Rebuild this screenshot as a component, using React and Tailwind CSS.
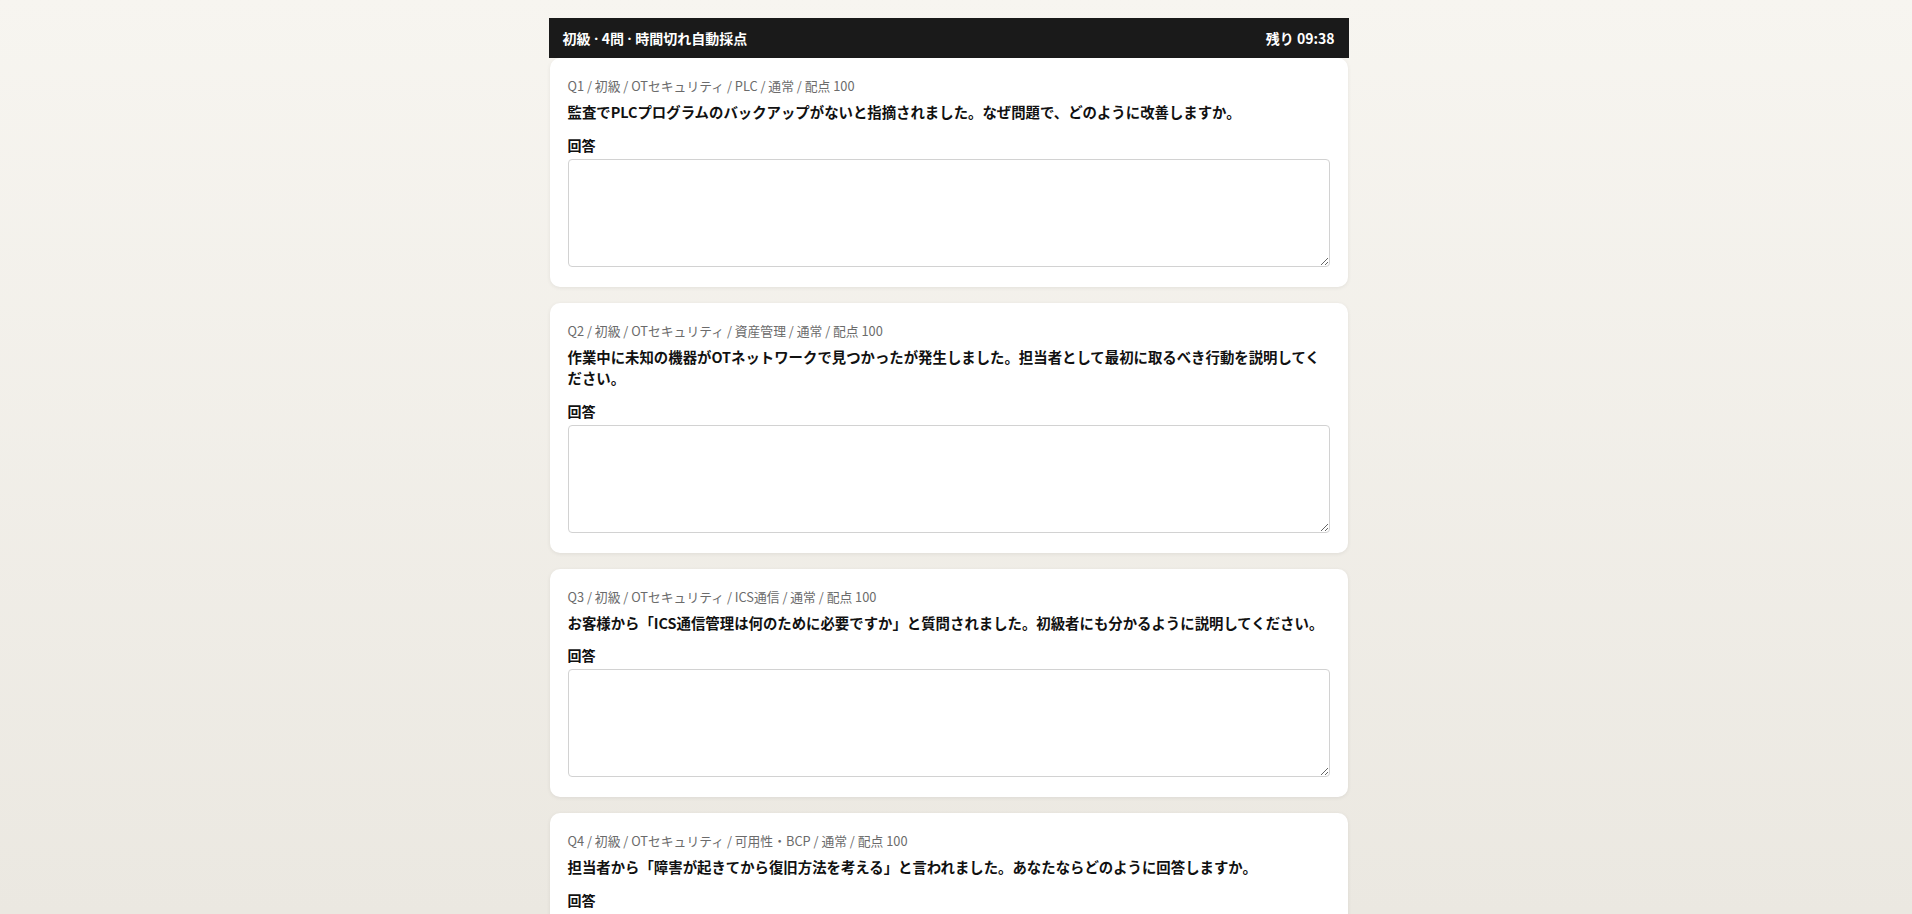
import { useState } from "react";

const questions = [
  {
    id: "Q1",
    meta: "初級 / OTセキュリティ / PLC / 通常 / 配点 100",
    text: "監査でPLCプログラムのバックアップがないと指摘されました。なぜ問題で、どのように改善しますか。",
  },
  {
    id: "Q2",
    meta: "初級 / OTセキュリティ / 資産管理 / 通常 / 配点 100",
    text: "作業中に未知の機器がOTネットワークで見つかったが発生しました。担当者として最初に取るべき行動を説明してください。",
  },
  {
    id: "Q3",
    meta: "初級 / OTセキュリティ / ICS通信 / 通常 / 配点 100",
    text: "お客様から「ICS通信管理は何のために必要ですか」と質問されました。初級者にも分かるように説明してください。",
  },
  {
    id: "Q4",
    meta: "初級 / OTセキュリティ / 可用性・BCP / 通常 / 配点 100",
    text: "担当者から「障害が起きてから復旧方法を考える」と言われました。あなたならどのように回答しますか。",
  },
];

export default function App() {
  const [answers, setAnswers] = useState({});

  const handleChange = (id) => (e) => {
    setAnswers({ ...answers, [id]: e.target.value });
  };

  return (
    <div
      className="min-h-screen bg-gradient-to-b from-[#f7f5f0] to-[#ebe8e1] bg-fixed pr-[15px] text-[#111]"
      style={{ fontFamily: '"Noto Sans CJK JP", "Noto Sans", sans-serif' }}
    >
      <div className="mx-auto w-[800px] pt-[18px] pb-[60px]">
        {/* Header bar */}
        <div className="flex h-[40px] items-center justify-between bg-[#1a1a1a] px-[14px] text-[14px] font-bold text-white">
          <span>
            初級<span style={{ fontFamily: '"Noto Sans", sans-serif' }}> · </span>4問
            <span style={{ fontFamily: '"Noto Sans", sans-serif' }}> · </span>
            時間切れ自動採点
          </span>
          <span>残り 09:38</span>
        </div>

        {/* Questions */}
        <div className="flex flex-col gap-[16px]">
          {questions.map((q) => (
            <div
              key={q.id}
              className="mx-px rounded-[10px] bg-white px-[18px] pt-[18px] pb-[20px] shadow-[0_1px_4px_rgba(0,0,0,0.07)]"
            >
              <div className="text-[12.8px] leading-[19px] text-[#6b6b6b]">
                {q.id} / {q.meta}
              </div>
              <div className="mt-[6px] text-[14.4px] font-bold leading-[21.6px]">
                {q.text}
              </div>
              <div className="mt-[12px] text-[14px] font-bold leading-[21px]">
                回答
              </div>
              <textarea
                value={answers[q.id] || ""}
                onChange={handleChange(q.id)}
                className="mt-[3px] block h-[108px] w-full rounded-[4px] border border-[#d2d2d2] bg-white p-2 text-[14px] outline-none"
              />
            </div>
          ))}
        </div>

        <div className="mt-[24px] flex justify-end">
          <button className="rounded-[6px] bg-[#1a1a1a] px-6 py-2.5 text-[14px] font-bold text-white">
            提出して採点する
          </button>
        </div>
      </div>
    </div>
  );
}
